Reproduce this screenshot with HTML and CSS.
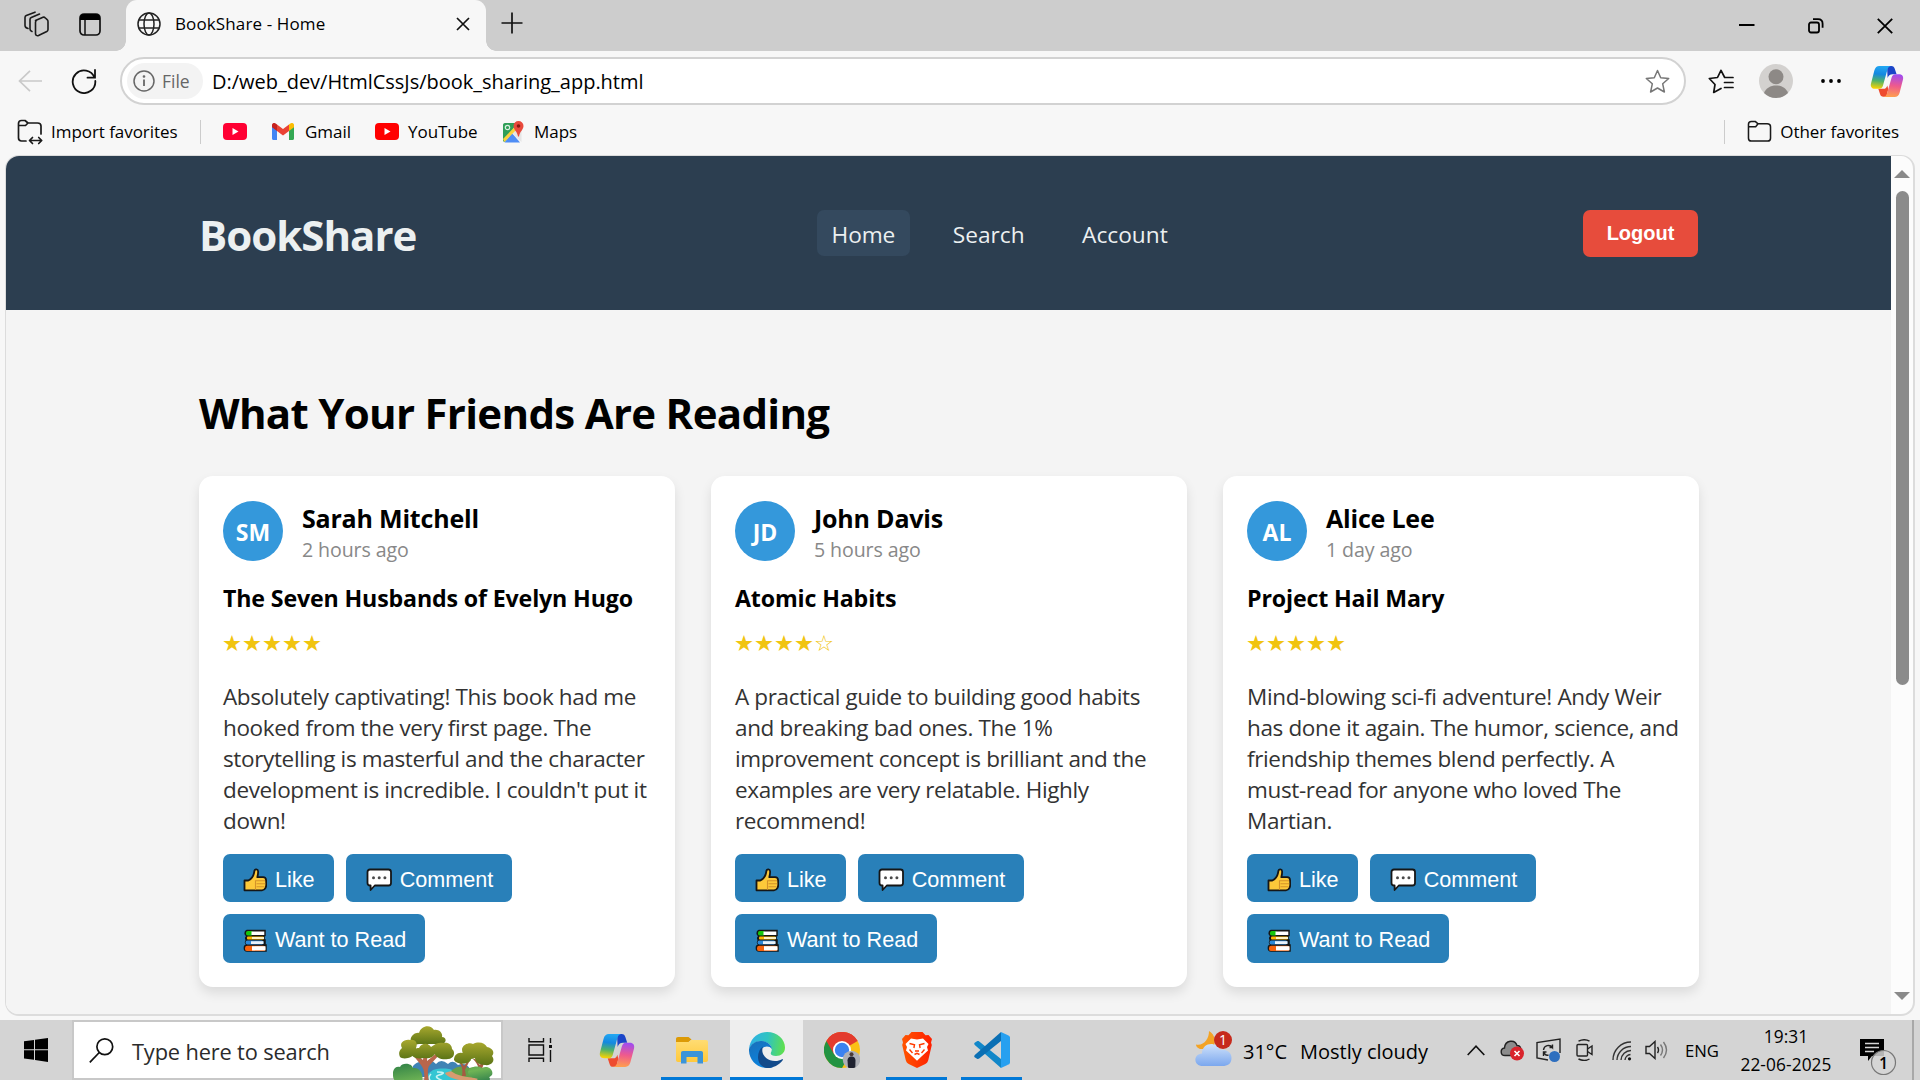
FILE: index.html
```
<!DOCTYPE html>
<html lang="en">
<head>
<meta charset="utf-8">
<title>BookShare - Home</title>
<link rel="stylesheet" href="styles.css">
</head>
<body>
<svg class="defs" aria-hidden="true">
  <defs>
    <linearGradient id="cpA" x1="0.4" y1="0" x2="0.3" y2="1"><stop offset="0" stop-color="#22a7f2"/><stop offset=".35" stop-color="#1488e0"/><stop offset=".65" stop-color="#4fb26a"/><stop offset="1" stop-color="#ffd400"/></linearGradient>
    <linearGradient id="cpB" x1="0.5" y1="0" x2="0.4" y2="1"><stop offset="0" stop-color="#a04cf0"/><stop offset=".5" stop-color="#ef5a8d"/><stop offset="1" stop-color="#ffa04d"/></linearGradient>
    <linearGradient id="edA" x1="0" y1="0.4" x2="1" y2="0.5"><stop offset="0" stop-color="#2fb0e6"/><stop offset=".5" stop-color="#2fc4c0"/><stop offset="1" stop-color="#60e04c"/></linearGradient>
    <linearGradient id="edB" x1="0" y1="0" x2="0.5" y2="1"><stop offset="0" stop-color="#1a6fb8"/><stop offset="1" stop-color="#0a84e0"/></linearGradient>
    <linearGradient id="brv" x1="0" y1="0" x2="1" y2="0"><stop offset="0" stop-color="#ff5500"/><stop offset="1" stop-color="#ff1f00"/></linearGradient>
    <linearGradient id="fold" x1="0" y1="0" x2="0" y2="1"><stop offset="0" stop-color="#ffdc73"/><stop offset="1" stop-color="#ffc93c"/></linearGradient>
    <linearGradient id="cloud" x1="0" y1="0" x2="0" y2="1"><stop offset="0" stop-color="#cfe2fb"/><stop offset="1" stop-color="#7ba7ee"/></linearGradient>
    <linearGradient id="leaf" x1="0" y1="0" x2="0" y2="1"><stop offset="0" stop-color="#a8a82e"/><stop offset="1" stop-color="#5b7416"/></linearGradient>
    <linearGradient id="bush" x1="0" y1="0" x2="1" y2="1"><stop offset="0" stop-color="#2f8046"/><stop offset=".6" stop-color="#6fb455"/><stop offset="1" stop-color="#2b7b4b"/></linearGradient>
    <symbol id="copilot" viewBox="0 0 34 32">
      <path d="M17 0h4.500c2 0 3 1.200 3.600 3l1.800 5.500h-4c-3 0-4.500 1.500-5.300 4z" fill="#1b45c8"/>
      <path d="M8 23.500h5.500c2 0 3-1 3.800-3.500l1 4-2 7.800h-3c-2 0-3-1-3.500-2.800z" fill="#ee4b2f"/>
      <path d="M9 0h12c-2 .4-3 1.800-3.600 3.800l-4.600 16.700c-.6 2-1.900 3-3.800 3H4.500C1.300 23.500-.3 21.200.5 18L4 4.500C4.900 1.500 6.500 0 9 0z" fill="url(#cpA)"/>
      <path d="M25 32H13.500c2-.4 3-1.800 3.600-3.800l4.600-16.200c.6-2 1.900-3.500 3.800-3.500h4c3.200 0 4.800 2.300 4 5.500L30 27.500C29.100 30.500 27.500 32 25 32z" fill="url(#cpB)"/>
    </symbol>
    <symbol id="folder" viewBox="0 0 26 24">
      <path d="M1.500 19V4.500c0-2 1-3 3-3h4L11.500 4H21c2 0 3.500 1 3.500 3v12c0 2-1 3-3 3h-17c-2 0-3-1-3-3zM1.500 7h7.500l2.500-3" fill="none" stroke="#1a1a1a" stroke-width="1.600" stroke-linejoin="round"/>
    </symbol>
    <symbol id="tube" viewBox="0 0 24 17"><rect width="24" height="17" rx="4"/><path d="M9.500 5v7l6-3.500z" fill="#fff"/></symbol>
    <symbol id="thumb" viewBox="0 0 24 24">
      <path d="M1.500 12.500h3.800c2.800-1.500 4.900-3.800 5.600-7L11.500 2.500c.3-1.400 3.500-1.700 3.600.8.100 2-.2 3.900-.8 5.900h5.800c2 0 2.900 1.200 3 3l.2 3c.2 3-.8 7.100-4.300 7.100H1.500z" fill="#fdc93a" stroke="#161616" stroke-width="1.800" stroke-linejoin="round"/>
      <path d="M12.500 12.300v9.500M13 12.800h9M13.500 15.700h8.500M13.500 18.700h7.900" stroke="#d3932a" stroke-width="1.100" fill="none"/>
    </symbol>
    <symbol id="bubble" viewBox="0 0 26 24">
      <path d="M4 1.500h18.500c1.600 0 2.500.9 2.500 2.500v11c0 1.600-.9 2.500-2.500 2.500H8.800L4.600 22v-4.500H4c-1.600 0-2.500-.9-2.500-2.500V4c0-1.600.9-2.500 2.500-2.500z" fill="#fff" stroke="#161616" stroke-width="1.800" stroke-linejoin="round"/>
      <g fill="#4a4a4a"><circle cx="7.500" cy="9.700" r="1.500"/><circle cx="13.200" cy="9.700" r="1.500"/><circle cx="18.900" cy="9.700" r="1.500"/></g>
    </symbol>
    <symbol id="books" viewBox="0 0 24 24">
      <path d="M4 1.500h18v5h-1v4.600h1v5h1V22H4c-3.500 0-3.500-6 0-6-2-1-2-4 0-4.700C2 10 2.500 8 4 7 1.500 6 1.500 2.500 4 1.500z" fill="#161616" stroke="#161616" stroke-width="1.500"/>
      <rect x="3" y="2" width="7" height="4.600" rx="1.800" fill="#16c60c"/><path d="M8.500 2.500H21.300v3.500H8.500z" fill="#fff"/>
      <rect x="4" y="7.500" width="17" height="3" rx="1" fill="#ffb900"/><path d="M9 8h12v2H9z" fill="#fff2c4"/>
      <rect x="2.500" y="11.600" width="18" height="4" rx="1.800" fill="#2b88d8"/><path d="M8 12.200h12.500v2.800H8z" fill="#e9f2fb"/>
      <rect x="2" y="16.700" width="20.500" height="5.400" rx="2.200" fill="#f7630c"/><path d="M9 17.200h13.500v4.200H9z" fill="#fff"/>
    </symbol>
  </defs>
</svg>

<div class="tabstrip">
  <div class="strip-tools">
    <svg width="26" height="26" viewBox="0 0 26 26" fill="none" stroke="#1a1a1a" stroke-width="1.600" stroke-linejoin="round" stroke-linecap="round"><path d="M12.500 9.500l7.500-3.200c1-.4 1.700 0 2.400.7l2 1.800c.6.500.6 1 .6 2v7.700c0 1-.3 1.500-1.200 2l-8.300 4c-1.500.6-3-.3-3-1.800V11.300c0-.8.200-1.400.8-1.800z"/><path d="M9 20.500c-1.500-.5-2-1.200-2-2.500V8.500c0-1 .4-1.600 1.300-2L16.500 3M5 17.500c-2-.5-3-1.500-3-3V6.500c0-1 .4-1.600 1.300-2L12 1.200"/></svg>
    <svg width="22" height="23" viewBox="0 0 22 23"><rect x="1" y="1" width="20" height="21" rx="4" fill="none" stroke="#111" stroke-width="1.700"/><path d="M1 7V5c0-2.500 1.500-4 4-4h12c2.500 0 4 1.500 4 4v2z" fill="#000"/><path d="M6 7v15" stroke="#111" stroke-width="1.500"/></svg>
  </div>
  <div class="tab">
    <svg width="24" height="24" viewBox="0 0 24 24" fill="none" stroke="#222" stroke-width="1.500"><circle cx="12" cy="12" r="11"/><ellipse cx="12" cy="12" rx="5" ry="11"/><path d="M2 8h20M2 16h20"/></svg>
    <span class="tab-title">BookShare - Home</span>
    <svg class="tab-close" width="14" height="14" viewBox="0 0 14 14" stroke="#111" stroke-width="1.700"><path d="M1 1l12 12M13 1L1 13"/></svg>
  </div>
  <svg class="new-tab" width="22" height="22" viewBox="0 0 22 22" stroke="#111" stroke-width="1.700"><path d="M11 .5v21M.5 11h21"/></svg>
  <div class="window-controls">
    <svg width="16" height="16" viewBox="0 0 16 16"><path d="M0 7h15.500" stroke="#000" stroke-width="2"/></svg>
    <svg width="16" height="16" viewBox="0 0 16 16" fill="none" stroke="#000" stroke-width="1.800"><rect x="1" y="4.500" width="10" height="10" rx="2"/><path d="M5 1.200h5c3 0 4.600 1.600 4.600 4.600v4"/></svg>
    <svg width="16" height="16" viewBox="0 0 16 16" stroke="#000" stroke-width="1.800"><path d="M.8.800l14.400 14.400M15.200.800L.8 15.200"/></svg>
  </div>
</div>

<div class="toolbar">
  <svg width="24" height="22" viewBox="0 0 24 22" fill="none" stroke="#c9c9c9" stroke-width="1.700"><path d="M24 11H1.500M12 .8L1.500 11 12 21.200"/></svg>
  <svg class="reload" width="26" height="26" viewBox="0 0 26 26" fill="none" stroke="#111" stroke-width="1.800" stroke-linecap="round"><path d="M23.500 9.500A11.300 11.300 0 1 0 24.300 13M24 2v7.700h-7.500"/></svg>
  <div class="address">
    <span class="scheme">
      <svg width="22" height="22" viewBox="0 0 22 22" fill="none" stroke="#666" stroke-width="1.500"><circle cx="11" cy="11" r="10"/><path d="M11 9.500V16" stroke-width="1.800"/><circle cx="11" cy="6.500" r=".6" fill="#666"/></svg>
      File
    </span>
    <span class="url">D:/web_dev/HtmlCssJs/book_sharing_app.html</span>
    <svg class="fav-star" width="25" height="25" viewBox="0 0 25 25" fill="none" stroke="#777" stroke-width="1.500" stroke-linejoin="round"><path d="M12.500 1.500l3.200 7.300 8 .7-6 5.300 1.700 8.200-6.900-4-6.900 4 1.700-8.200-6-5.300 8-.7z"/></svg>
  </div>
  <svg class="collections" width="26" height="25" viewBox="0 0 26 25" fill="none" stroke="#111" stroke-width="1.700" stroke-linejoin="round" stroke-linecap="round"><path d="M25 8.500h-8.300L13 1.300 9.500 8.500 1.300 9.500l5.700 6L5.700 23.500l7.300-4M16.500 13.500H25M16.500 18.500H25"/></svg>
  <svg class="avatar-icon" width="34" height="34" viewBox="0 0 34 34"><circle cx="17" cy="17" r="17" fill="#d3d1cf"/><circle cx="17" cy="12.800" r="7.500" fill="#8d8986"/><path d="M5 29c2-5 6.500-7.500 12-7.500S27 24 29 29a17 17 0 0 1-24 0z" fill="#8d8986"/></svg>
  <svg class="more" width="20" height="6" viewBox="0 0 20 6"><circle cx="2" cy="3" r="1.900"/><circle cx="10" cy="3" r="1.900"/><circle cx="18" cy="3" r="1.900"/></svg>
  <svg class="copilot-side" width="34" height="31"><use href="#copilot"/></svg>
</div>

<div class="favorites">
  <span class="fav import">
    <svg width="26" height="26" viewBox="0 0 26 26" fill="none" stroke="#1a1a1a" stroke-width="1.700" stroke-linejoin="round" stroke-linecap="round"><path d="M9 22H4.500c-2 0-3-1-3-3V4.500c0-2 1-3 3-3H8L11 4h9.500c2.500 0 3.500 1 3.500 3v8M1.500 6.500H8.500L11 4M13 21.500h11M15.500 18.500l-3 3 3 3M21.700 18.500l3 3-3 3"/></svg>
    Import favorites
  </span>
  <span class="fav yt"><svg width="24" height="17" fill="#ff0033"><use href="#tube"/></svg></span>
  <span class="fav gmail">
    <svg width="22" height="17" viewBox="0 0 22 17"><path d="M0 3v12.500C0 16.400.6 17 1.500 17H5V6z" fill="#4285f4"/><path d="M22 3v12.500c0 .9-.6 1.500-1.500 1.500H17V6z" fill="#34a853"/><path d="M17 1.500V8l5-3.800V2c0-2-2.200-2.600-3.700-1.500z" fill="#fbbc04"/><path d="M5 8V1.500L11 6l6-4.500V8l-6 4.500z" fill="#ea4335"/><path d="M0 2v2.200L5 8V1.500L3.700.5C2.200-.6 0 0 0 2z" fill="#c5221f"/></svg>
    Gmail
  </span>
  <span class="fav youtube"><svg width="24" height="17" fill="#ff0000"><use href="#tube"/></svg>YouTube</span>
  <span class="fav maps">
    <svg width="22" height="22" viewBox="0 0 22 22"><path d="M1 4c0-1 .5-2 2-2h12L3 21c-1.500 0-2-1-2-2z" fill="#2f9e57"/><path d="M2.500 21.500L10 12l8 9.500z" fill="#4f8df5"/><path d="M10 12.500L18 4l1.500 5v12z" fill="#e6e6e6"/><path d="M1 18L14.500 4l1.500 3L2.500 21z" fill="#fbd23c"/><circle cx="5.500" cy="6.500" r="2.200" fill="none" stroke="#d8f0df" stroke-width="1.200"/><path d="M16.500 0a5 5 0 0 1 5 5c0 3.500-4 6-4.500 10.500h-1C15.500 11 11.500 8.500 11.500 5a5 5 0 0 1 5-5z" fill="#e84a3c"/><circle cx="16.500" cy="5" r="1.800" fill="#8a1a12"/></svg>
    Maps
  </span>
  <span class="fav other"><svg width="25" height="23"><use href="#folder"/></svg>Other favorites</span>
</div>

<div class="viewport">
  <div class="page">
    <header class="site-header">
      <div class="logo">BookShare</div>
      <nav class="nav">
        <a class="nav-link active">Home</a>
        <a class="nav-link">Search</a>
        <a class="nav-link">Account</a>
      </nav>
      <button class="logout">Logout</button>
    </header>
    <main class="feed">
      <h1 class="feed-title">What Your Friends Are Reading</h1>
      <div class="cards">
        <article class="card">
          <div class="card-head"><div class="avatar">SM</div><div><div class="name">Sarah Mitchell</div><div class="time">2 hours ago</div></div></div>
          <h3 class="book">The Seven Husbands of Evelyn Hugo</h3>
          <div class="stars">★★★★★</div>
          <p class="review">Absolutely captivating! This book had me<br>hooked from the very first page. The<br>storytelling is masterful and the character<br>development is incredible. I couldn't put it<br>down!</p>
          <div class="actions">
            <button class="btn"><svg width="24" height="24"><use href="#thumb"/></svg>Like</button>
            <button class="btn"><svg width="26" height="24"><use href="#bubble"/></svg>Comment</button>
            <button class="btn"><svg width="24" height="24"><use href="#books"/></svg>Want to Read</button>
          </div>
        </article>
        <article class="card">
          <div class="card-head"><div class="avatar">JD</div><div><div class="name">John Davis</div><div class="time">5 hours ago</div></div></div>
          <h3 class="book">Atomic Habits</h3>
          <div class="stars">★★★★☆</div>
          <p class="review">A practical guide to building good habits<br>and breaking bad ones. The 1%<br>improvement concept is brilliant and the<br>examples are very relatable. Highly<br>recommend!</p>
          <div class="actions">
            <button class="btn"><svg width="24" height="24"><use href="#thumb"/></svg>Like</button>
            <button class="btn"><svg width="26" height="24"><use href="#bubble"/></svg>Comment</button>
            <button class="btn"><svg width="24" height="24"><use href="#books"/></svg>Want to Read</button>
          </div>
        </article>
        <article class="card">
          <div class="card-head"><div class="avatar">AL</div><div><div class="name">Alice Lee</div><div class="time">1 day ago</div></div></div>
          <h3 class="book">Project Hail Mary</h3>
          <div class="stars">★★★★★</div>
          <p class="review">Mind-blowing sci-fi adventure! Andy Weir<br>has done it again. The humor, science, and<br>friendship themes blend perfectly. A<br>must-read for anyone who loved The<br>Martian.</p>
          <div class="actions">
            <button class="btn"><svg width="24" height="24"><use href="#thumb"/></svg>Like</button>
            <button class="btn"><svg width="26" height="24"><use href="#bubble"/></svg>Comment</button>
            <button class="btn"><svg width="24" height="24"><use href="#books"/></svg>Want to Read</button>
          </div>
        </article>
      </div>
    </main>
  </div>
  <div class="scrollbar">
    <svg width="16" height="8" viewBox="0 0 16 8"><path d="M0 8l8-8 8 8z"/></svg>
    <div class="thumb"></div>
    <svg class="arrow-down" width="16" height="8" viewBox="0 0 16 8"><path d="M0 0l8 8 8-8z"/></svg>
  </div>
</div>

<div class="taskbar">
  <div class="start"><svg width="24" height="24" viewBox="0 0 24 24"><path d="M0 3.300l10-1.400v9.400H0zM11 1.700L24 0v11.300H11zM0 12.300h10v9.500L0 20.500zM11 12.300h13V24l-13-1.900z"/></svg></div>
  <div class="search">
    <svg width="25" height="25" viewBox="0 0 25 25" fill="none" stroke="#111" stroke-width="1.700"><circle cx="15.800" cy="8.800" r="7.900"/><path d="M10.300 14.500L.8 24.300"/></svg>
    <span class="search-text">Type here to search</span>
    <svg class="scene" width="103" height="56" viewBox="0 0 103 56">
      <path d="M20 40q6-7 12-2 5-7 11 0 5-6 12 0 5-5 10 1 8-3 12 4v8H20z" fill="#3f83b5"/>
      <path d="M40 44c10-3 22-1 20 2-8 3 6 5 12 10H32c-2-5 4-9 8-12z" fill="#35c6d3"/>
      <path d="M44 46c8 0 8 1 2 3s0 4 6 7M38 48c-3 3-2 5 0 8" fill="none" stroke="#c8f4f4" stroke-width="1.600"/>
      <path d="M52 47c6-3 20-3 30 0l10 9H76c-10-2-22-4-24-9z" fill="#d79b70"/>
      <path d="M58 45q8-7 18-3 10-3 18 5l1 4c-14 2-30 0-37-6z" fill="#65a04a"/>
      <path d="M31 56c1-9 0-13-3-17l-9-11 2-2 9 8 2-18h3l-1 19 11-9 2 2-11 12c-2 4-1 9 0 16z" fill="#b9664b"/>
      <path d="M69 50c1-6 0-10-3-14h2l3 4 3-4h2l-4 8 1 6zM85 53c2-8 1-14-5-20h2l5 6 4-8h2l-4 12 2 10z" fill="#a65a41"/>
      <path d="M18 16c-2-6 5-10 8-9 2-8 12-9 15-3 5-1 9 3 8 7 5 0 5 7-1 7H26c-4 1-7 0-8-2z" fill="url(#leaf)"/>
      <path d="M7 31c-2-5 0-7 2-9-3-5 2-9 8-8 6-1 8 4 6 8 0 5-3 9-8 10-4 1-7 0-8-1zM19 29c0-6 4-7 7-7 3-6 10-5 12-1 5-4 8-5 13-4 4-1 8 2 8 6 4 3 2 10-4 10-6 1-12-1-13-5-3 4-6 5-11 4-6 1-11 0-12-3z" fill="url(#leaf)"/>
      <path d="M61 34c0-5 4-8 8-7 5 0 9 3 9 7-3 5-14 5-17 0zM69 23c1-5 8-7 11-5 6-3 12-1 14 3 6 1 8 6 5 9 4 5-1 10-7 9-6 0-10-3-10-7-6 3-13-1-13-9z" fill="url(#leaf)"/>
      <path d="M0 50c-1-7 3-10 7-9 2-5 12-4 13 1 7-1 11 6 9 14H3c-2-2-3-4-3-6zM84 52c1-5 12-5 13 1l-1 3H85zM75 47c0-6 9-8 14-5 6-3 12 2 10 7-5 6-22 5-24-2z" fill="url(#bush)"/>
    </svg>
  </div>
  <div class="cell task-view"><svg width="24" height="24" viewBox="0 0 24 24" fill="none" stroke="#111" stroke-width="1.400"><path d="M1 0v3.800h14.500V0M1 24v-3.800h14.500V24M1 7h14.500v10H1zM22.500 0v5M22.500 12v12"/><path d="M21 7h3v3h-3z" fill="#111" stroke="none"/></svg></div>
  <div class="cell"><svg width="36" height="33"><use href="#copilot"/></svg></div>
  <div class="cell open"><svg width="32" height="27" viewBox="0 0 32 27"><path d="M0 5V2c0-1.200.8-2 2-2h10.500l3 2.500L12.500 5z" fill="#dc9a06"/><path d="M0 5h13l2-2h15c1.300 0 2 .7 2 2v18c0 1.200-.8 2-2 2H2c-1.200 0-2-.8-2-2z" fill="url(#fold)"/><path d="M5 26.500V16c0-1.300.7-2 2-2h18c1.300 0 2 .7 2 2v10.500h-5.500V20h-11v6.500z" fill="#3b94d9"/></svg></div>
  <div class="cell open current"><svg width="36" height="36" viewBox="0 0 36 36"><path d="M0 17C1 7 8 0 18 0c10.500 0 18 7.500 18 15.500 0 5.500-4 8.500-9 8.500-4 0-6-1.500-5-3.500 2-4 0-8.500-5.500-10.500C9 7.500 3 11 0 17z" fill="url(#edA)"/><path d="M0 17c2-5 6.500-8 11.500-8 6.500 0 11 4 11.500 8-3-4-9-3-11 1-4 8 3 16.500 12 17.500-2 .5-4 .5-6 .5C7.500 36-.5 27.500 0 17z" fill="url(#edB)"/><path d="M14 14.500c-3 8 4 14.500 12 14.500 3 0 5-.8 7-1.800.8-.3 1.200.3.700 1C30 33 24.500 36 18 36c-6.500-1-9-6-9-11 0-4.500 2-8.500 5-10.500z" fill="#114a8b"/></svg></div>
  <div class="cell"><svg width="36" height="36" viewBox="0 0 36 36"><circle cx="18" cy="18" r="18" fill="#fbc116"/><path d="M18 18L2.400 9A18 18 0 0 1 33.600 9z" fill="#e33b2e"/><path d="M18 18L2.400 9A18 18 0 0 0 18 36l7.800-13.500z" fill="#229342"/><path d="M18 9h15.600A18 18 0 0 0 2.400 9l7.800 13.500z" fill="#e33b2e"/><circle cx="18" cy="18" r="9" fill="#fff"/><circle cx="18" cy="18" r="7.200" fill="#3b82f0"/><circle cx="27.500" cy="27.500" r="8.800" fill="#aeb0b6"/><path d="M24 35.500l-.5-7c0-2.500 1.500-3.500 3-4h2c1.700.5 3 1.500 3 4l-.2 6.800c-2 1.200-5.300 1.200-7.300.2z" fill="#1f2230"/><circle cx="27.500" cy="22.300" r="2" fill="#4a3a35"/></svg></div>
  <div class="cell open"><svg width="30" height="36" viewBox="0 0 30 36"><path d="M9.500 0h11l3 3.300 3-.3L30 7l-1 3.500.8 2.500-3.500 15c-.5 2-1.500 3-3 4L15 36l-8.300-4c-1.500-1-2.500-2-3-4L.2 13 1 10.500 0 7l3.500-4 3 .3z" fill="url(#brv)"/><path d="M9 6.500l6 1 6-1 5.500 5.500-1.500 3 1 3.500-6 5.500-5 4.800L10 24 4 18.500l1-3.500L3.500 12z" fill="#fff"/><path d="M7.500 11.500l5 1.200-.6 3.300M22.500 11.500l-5 1.200.6 3.300M12.500 22.500l2.500-1.200 2.500 1.200M7.500 17.500l3 3.500M22.500 17.500l-3 3.500M13 19h4" stroke="#ff3a00" stroke-width="1.400" fill="none"/></svg></div>
  <div class="cell open"><svg width="36" height="36" viewBox="0 0 36 36"><path d="M1 10.500l2-1.300c.7-.4 1.500-.4 2.200.2L27 27v9L.8 13c-.8-.8-.8-1.900.2-2.500z" fill="#1187c9"/><path d="M1 25.500l2 1.300c.7.400 1.500.4 2.200-.2L27 9V0L.8 23c-.8.800-.8 1.900.2 2.500z" fill="#0a6fb4"/><path d="M27 0l7.500 3.500c1 .5 1.500 1.200 1.500 2.300v24.400c0 1.100-.5 1.800-1.500 2.300L27 36z" fill="#27a0f0"/></svg></div>

  <div class="tray">
    <svg class="weather" width="38" height="37" viewBox="0 0 38 37"><path d="M14 1c6 3 8 12 3 18H5C2 18 1 16 1 14.500 9 16 14 9 14 1z" fill="#f3a325"/><path d="M8 36c-10 0-10-12-1-12.500C7 12 22 11 24.500 20c7-1 12 2 12 8s-4 8-9 8z" fill="url(#cloud)"/><circle cx="28" cy="10" r="9" fill="#c62a1c"/><text x="28" y="15.200" text-anchor="middle" class="badge-num">1</text></svg>
    <span class="temp">31°C</span>
    <span class="cond">Mostly cloudy</span>
    <svg class="chev" width="18" height="11" viewBox="0 0 18 11" fill="none" stroke="#111" stroke-width="1.600"><path d="M.7 10L9 1.200 17.300 10"/></svg>
    <svg class="drive" width="24" height="22" viewBox="0 0 24 22"><path d="M5 16.500c-5 0-5-7-.5-7.500C5 1 15 0 17 6.500c3 0 4 2 4 5v5z" fill="#8c8c8c" stroke="#222" stroke-width="1.400"/><circle cx="17" cy="14.500" r="7" fill="#d9242c"/><path d="M14.500 12l5 5M19.500 12l-5 5" stroke="#fff" stroke-width="1.600"/></svg>
    <svg class="sync" width="25" height="24" viewBox="0 0 25 24" fill="none" stroke="#222" stroke-width="1.400"><path d="M24 15V1L1 4.500v15.500l11 2"/><path d="M7.500 12a5 5 0 0 1 9-2.500V6.500M16.500 9.500h-3M7.500 18v-4h3M8 14.500c1 2.500 3 3 4.500 2.500"/><circle cx="18.500" cy="18.500" r="5.500" fill="#2e6fbf" stroke="none"/></svg>
    <svg class="cam" width="18" height="22" viewBox="0 0 18 22" fill="none" stroke="#222" stroke-width="1.400"><rect x="1" y="5.500" width="10.500" height="11.500" rx="1"/><path d="M11.500 10l4.500-3v8.500l-4.500-3M2.500 2.200q6-3 11 0M2.500 20q6 3 11 0"/></svg>
    <svg class="wifi" width="20" height="20" viewBox="0 0 20 20" fill="none" stroke="#333" stroke-width="1.400"><path d="M1 19A18 18 0 0 1 19 1M5 19A14 14 0 0 1 19 5.500M9 19A10 10 0 0 1 19 9.500M13 19a6 6 0 0 1 5.500-5.500"/><circle cx="17.500" cy="17.800" r="1.600" fill="#111" stroke="none"/></svg>
    <svg class="vol" width="23" height="20" viewBox="0 0 23 20" fill="none" stroke="#222" stroke-width="1.400"><path d="M1 6.500v7h3.500l5.500 5V1.500l-5.500 5zM12.500 7q2 3 0 6"/><path d="M15.500 4.500q4 5.500 0 11M18.500 2q6 8 0 16" stroke="#777"/></svg>
    <span class="lang">ENG</span>
    <span class="clock"><span>19:31</span><span>22-06-2025</span></span>
    <svg class="notice" width="37" height="38" viewBox="0 0 37 38"><path d="M0 0h24v17H12l-4 5v-5H0z"/><path d="M5 4.500h14M5 8.500h14M5 12.500h9" stroke="#d5d5d5" stroke-width="1.300"/><circle cx="23.500" cy="23.500" r="12" fill="#d5d5d5" fill-opacity=".85" stroke="#777" stroke-width="1.200"/><text x="23.500" y="29.500" text-anchor="middle" class="notice-num">1</text></svg>
  </div>
</div>
</body>
</html>
```
FILE: styles.css
```
* { box-sizing: border-box; }
body {
  margin: 0;
  width: 1920px;
  height: 1080px;
  overflow: hidden;
  display: flex;
  flex-direction: column;
  background: #f7f7f7;
  font-family: "Open Sans", "Noto Sans", sans-serif;
  color: #000;
}
svg { display: block; flex: none; }
.defs { position: absolute; width: 0; height: 0; }

/* Tab strip */
.tabstrip { display: flex; height: 51px; background: #cdcdcd; flex: none; }
.strip-tools { width: 126px; padding: 11px 0 0 23px; display: flex; gap: 30px; align-items: flex-start; }
.strip-tools svg:last-child { margin-top: 2px; }
.tab {
  position: relative;
  width: 360px;
  display: flex;
  align-items: center;
  padding: 0 16px 3px 11px;
  background: #f7f7f7;
  border-radius: 11px 11px 0 0;
}
.tab::before, .tab::after {
  content: "";
  position: absolute;
  bottom: 0;
  width: 10px;
  height: 10px;
}
.tab::before { left: -10px; background: radial-gradient(circle at 0 0, transparent 9.5px, #f7f7f7 10px); }
.tab::after { right: -10px; background: radial-gradient(circle at 100% 0, transparent 9.5px, #f7f7f7 10px); }
.tab-title { margin: -2px 0 0 14px; font-size: 17px; letter-spacing: .12px; }
.tab-close { margin-left: auto; }
.new-tab { margin: 12px 0 0 15px; }
.window-controls { margin: 18px 27px 0 auto; display: flex; gap: 53px; }

/* Address bar */
.toolbar { display: flex; align-items: center; height: 60px; padding: 0 16px 0 18px; flex: none; }
.reload { margin-left: 29px; }
.address {
  display: flex;
  align-items: center;
  width: 1566px;
  height: 48px;
  margin-left: 23px;
  padding: 0 14px 0 5px;
  background: #fff;
  border: 2px solid #d2d2d2;
  border-radius: 24px;
}
.scheme {
  display: flex;
  align-items: center;
  gap: 7px;
  width: 76px;
  height: 36px;
  padding-left: 6px;
  border-radius: 18px;
  background: #f3f3f3;
  color: #666;
  font-size: 17.5px;
}
.url { margin-left: 9px; font-size: 20px; letter-spacing: -.02px; white-space: nowrap; }
.fav-star { margin-left: auto; }
.collections { margin-left: 22px; }
.avatar-icon { margin-left: 25px; }
.more { margin-left: 28px; }
.copilot-side { margin-left: auto; }

/* Favorites bar */
.favorites { display: flex; align-items: center; height: 44px; padding: 0 21px 3px 17px; font-size: 17px; letter-spacing: -.05px; flex: none; }
.fav { display: flex; align-items: center; white-space: nowrap; }
.import { gap: 8px; height: 24px; width: 184px; border-right: 1px solid #ccc; }
.yt { margin-left: 22px; }
.gmail { margin-left: 25px; gap: 11px; width: 103px; }
.youtube { gap: 9px; width: 127px; }
.maps { gap: 10px; }
.other { margin-left: auto; gap: 8px; height: 24px; padding-left: 22px; border-left: 1px solid #ccc; }

/* Page frame */
.viewport {
  display: flex;
  height: 861px;
  margin: 0 5px;
  border: 1px solid #dcdcdc;
  border-width: 1px 2px 2px 1px;
  border-radius: 14px;
  overflow: hidden;
  background: #fcfcfc;
  flex: none;
}
.page { width: 1885px; background: #f4f4f4; }
.scrollbar { flex: 1; padding: 14px 0 14px; display: flex; flex-direction: column; align-items: center; fill: #8a8a8a; }
.thumb { width: 13px; height: 494px; margin-top: 13px; border-radius: 7px; background: #8b8b8b; }
.arrow-down { margin-top: auto; }

/* Site header */
.site-header {
  display: flex;
  align-items: center;
  justify-content: space-between;
  height: 154px;
  padding: 0 193px;
  background: #2c3e50;
  color: #ecf0f1;
}
.logo { margin-top: 2px; font-size: 42px; font-weight: 700; letter-spacing: -1px; }
.nav { display: flex; gap: 28.5px; }
.nav-link { height: 46px; line-height: 49px; padding: 0 14.500px; border-radius: 7px; font-size: 22.7px; }
.active { background: #34495e; letter-spacing: -.1px; }
.logout {
  width: 115px;
  height: 47px;
  padding: 0;
  border: 0;
  border-radius: 7px;
  background: #e74c3c;
  color: #fff;
  font: 700 20px "Liberation Sans", Arial, sans-serif;
}

/* Feed */
.feed { padding: 72px 193px 0; }
.feed-title { margin: 0; font-size: 42px; line-height: 62px; font-weight: 700; letter-spacing: -.7px; }
.cards { display: grid; grid-template-columns: repeat(3, 476px); gap: 36px; margin-top: 32px; }
.card { height: 511px; padding: 25px 24px 24px; background: #fff; border-radius: 14px; box-shadow: 0 6px 12px rgba(0, 0, 0, .1); }
.card-head { display: flex; gap: 19px; height: 62px; }
.avatar {
  width: 60px;
  height: 60px;
  border-radius: 50%;
  background: #3498db;
  color: #fff;
  font-size: 23px;
  font-weight: 700;
  line-height: 63px;
  text-align: center;
}
.name { font-size: 25px; line-height: 34px; font-weight: 700; letter-spacing: -.2px; }
.time { font-size: 19.6px; line-height: 29px; color: #888; letter-spacing: -.1px; }
.book { margin: 19.5px 0 0; font-size: 23.2px; line-height: 31px; font-weight: 700; letter-spacing: -.15px; white-space: nowrap; }
.stars { height: 30px; margin: 14px 0 0 -1px; font: 22.3px/30px "DejaVu Sans", sans-serif; color: #f1c40f; }
.review { margin: 23.5px 0 0; font-size: 22.5px; line-height: 31px; letter-spacing: -.36px; color: #333; white-space: nowrap; }
.actions { display: flex; flex-wrap: wrap; gap: 12px; margin-top: 17.5px; }
.btn {
  display: flex;
  align-items: center;
  gap: 8px;
  height: 48px;
  padding: 4px 19px 0 20px;
  border: 0;
  border-radius: 7px;
  background: #2980b9;
  color: #fff;
  font: 21.6px "Liberation Sans", Arial, sans-serif;
  white-space: nowrap;
}
.btn:last-child { height: 49px; }
.btn svg { margin-top: 1px; }

/* Taskbar */
.taskbar { display: flex; height: 60px; margin-top: auto; background: #d4d4d4; flex: none; }
.start { width: 72px; display: flex; align-items: center; padding-left: 24px; }
.search { display: flex; align-items: center; width: 431px; height: 60px; padding: 0 5px 0 15px; background: #fff; border: 2px solid #c8c8c8; }
.search-text { margin: 2px 0 0 18px; font-size: 21.8px; letter-spacing: -.15px; color: #2b2b2b; }
.scene { margin: 4px 0 -4px auto; }
.cell { display: flex; align-items: center; justify-content: center; width: 75px; border: solid transparent; border-width: 0 7px; }
.task-view { width: 76px; padding-right: 2px; }
.open { background: linear-gradient(#0078d7, #0078d7) bottom / 100% 3px no-repeat padding-box; }
.current { border-width: 0 1px; background-color: #eee; background-clip: padding-box; }
.tray {
  display: flex;
  align-items: center;
  height: 60px;
  margin: 0 6px 0 auto;
  padding-right: 15px;
  border-right: 2px solid #a8a8a8;
  white-space: nowrap;
}
.weather { margin-top: -3px; }
.temp { margin: 2px 0 0 10px; font-size: 20px; width: 57px; }
.cond { margin-top: 2px; font-size: 20px; width: 129px; }
.chev { margin-left: 38px; }
.drive { margin-left: 15px; }
.sync { margin-left: 12px; }
.cam { margin-left: 15px; }
.wifi { margin-left: 18px; margin-top: 2px; }
.vol { margin-left: 13px; }
.lang { margin-left: 17px; width: 35px; font-size: 16.7px; }
.clock { display: flex; flex-direction: column; align-items: center; width: 94px; margin: 1px 0 0 19px; font-size: 17.3px; line-height: 28px; letter-spacing: .1px; }
.notice { margin: 15px 0 0 27px; width: 37px; }
.badge-num { font-size: 14px; fill: #fff; }
.notice-num { font-size: 16px; font-weight: 600; }
```
